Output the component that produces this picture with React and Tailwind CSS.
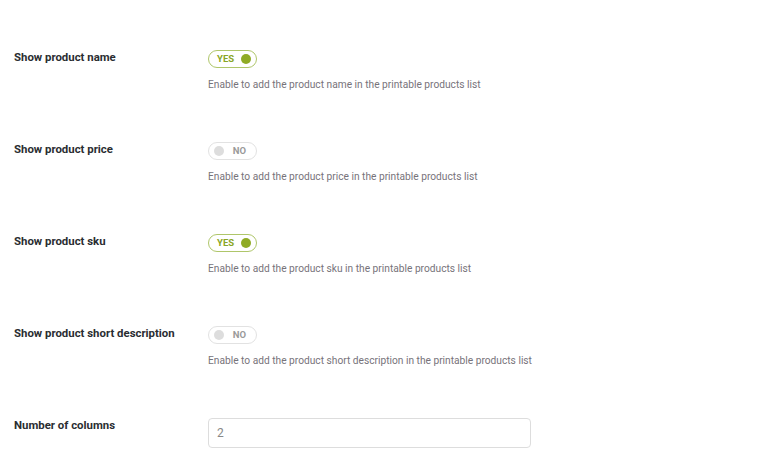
import React, { useState } from "react";

const settings = [
  { key: "name", label: "Show product name", on: true },
  { key: "price", label: "Show product price", on: false },
  { key: "sku", label: "Show product sku", on: true },
  { key: "short description", label: "Show product short description", on: false },
];

const Toggle = ({ on, onClick }) => (
  <button
    onClick={onClick}
    className={`flex items-center h-[18px] w-[49px] rounded-full border ${
      on ? "border-[#afc66a] pl-[8px] pr-[5px] justify-between" : "border-[#e2e2e2] pl-[5px] pr-[10px] justify-between"
    }`}
  >
    {on ? (
      <>
        <span className="text-[9.5px] font-bold leading-none text-[#8aa626]">YES</span>
        <span className="w-[10px] h-[10px] rounded-full bg-[#8fab25]"></span>
      </>
    ) : (
      <>
        <span className="w-[10px] h-[10px] rounded-full bg-[#dddddd]"></span>
        <span className="text-[9.5px] font-bold leading-none text-[#9a9a9a]">NO</span>
      </>
    )}
  </button>
);

export default function App() {
  const [values, setValues] = useState(settings.map((s) => s.on));
  const [columns, setColumns] = useState("2");

  return (
    <div
      className="bg-white w-[769px] h-[452px] overflow-hidden pt-[49px] pl-[14px]"
      style={{ fontFamily: "Roboto, sans-serif" }}
    >
      {settings.map((s, i) => (
        <div key={s.key} className="flex h-[92px]">
          <div className="w-[194px] text-[11.4px] leading-4 font-bold text-[#2a2d31]">
            {s.label}
          </div>
          <div className="flex flex-col items-start pt-[1px]">
            <Toggle
              on={values[i]}
              onClick={() =>
                setValues(values.map((v, j) => (j === i ? !v : v)))
              }
            />
            <p className="mt-[10px] text-[10.2px] leading-[14px] text-[#77737a]">
              Enable to add the product {s.key} in the printable products list
            </p>
          </div>
        </div>
      ))}

      {/* Number of columns */}
      <div className="flex">
        <div className="w-[194px] text-[11.4px] leading-4 font-bold text-[#2a2d31]">
          Number of columns
        </div>
        <input
          type="text"
          value={columns}
          onChange={(e) => setColumns(e.target.value)}
          className="mt-[1px] w-[323px] h-[30px] px-[8px] text-[12px] text-[#888] border border-[#dddddd] rounded-[4px] outline-none"
        />
      </div>
    </div>
  );
}
